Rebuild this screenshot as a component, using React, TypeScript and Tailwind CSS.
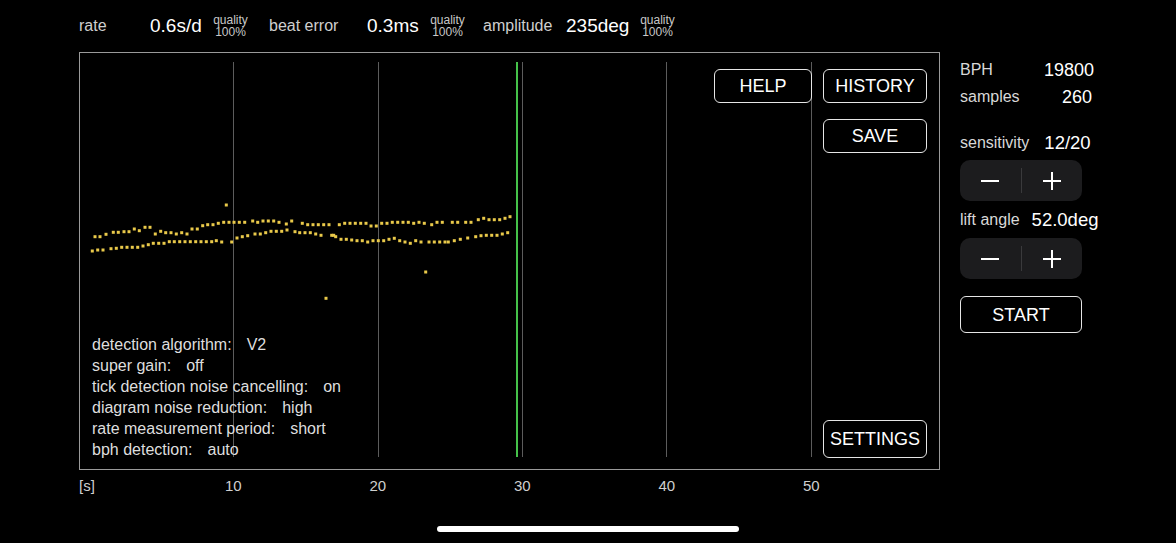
import { ReactNode } from 'react';

// upper and lower beat traces, chart-local coordinates (px)
const upper: [number, number][] = [
  [16, 184.7], [21, 184.7], [27, 182.3], [34.3, 180.3], [39.3, 180.3], [45, 179.7], [50, 179.7],
  [55.3, 177], [60.3, 178.7], [66, 175.3], [71, 175.3], [76.3, 182], [81.7, 179.3], [86.7, 180.7],
  [92, 180.7], [97.3, 182], [102.7, 180.7], [108, 182], [113, 177], [118.3, 177], [123.7, 173.7],
  [128.7, 172.7], [134, 172.7], [139.3, 171.3], [144.7, 170.3], [150, 170.3], [155, 170.3],
  [160.3, 170.3], [165.7, 170.3], [173.7, 169], [178.7, 170.3], [184, 169], [189.3, 169],
  [194.7, 169], [200, 170.3], [207.3, 172], [212.7, 169], [223.3, 171.3], [228.7, 172.7],
  [234, 172.7], [239.3, 172.7], [244.7, 172.7], [250, 172.7], [260.3, 172.7], [265.7, 171.3],
  [271, 171.3], [276.3, 171.3], [281.7, 171.3], [287, 171.3], [292, 174], [297.3, 174],
  [302.7, 171.3], [308, 171.3], [313.3, 170.3], [318.7, 170.3], [324, 170.3], [329.3, 170.3],
  [334.7, 171.3], [340, 170.3], [345.3, 171.3], [352.7, 172.7], [358, 170.3], [363.3, 170.3],
  [373.3, 170.3], [378.7, 170.3], [386.7, 170.3], [392, 170.3], [399.3, 167.7], [404.7, 166.3],
  [410, 167.7], [415.3, 167.7], [420.7, 167.7], [426, 166.3], [431, 164.7],
];

const lower: [number, number][] = [
  [13.3, 199], [18.7, 198], [24, 198], [32, 196.7], [37.3, 196.3], [42.7, 195.3], [48, 195.3],
  [53.3, 195.3], [58.7, 195.3], [64, 194], [69.3, 192.7], [74.3, 191.3], [79.7, 191.3], [85, 191.3],
  [90.3, 189.7], [95.3, 189.7], [100.7, 189.7], [106, 189.7], [111.3, 189.7], [116.7, 189.7],
  [122, 189.7], [127.3, 189.7], [132.7, 189.7], [137.3, 188.7], [142.7, 190], [152.7, 190],
  [158, 186], [163.3, 184.7], [168.7, 183.7], [176, 182], [181.3, 182], [186.7, 180.7],
  [192, 179.3], [197.3, 179.3], [202.7, 179.3], [208, 178], [216, 179.7], [220.7, 180.7],
  [226, 180.7], [231.3, 180.7], [236.7, 182], [242, 183.3], [252.7, 183.3], [254.7, 183.3],
  [256.7, 184.7], [262, 187.3], [267.3, 187.3], [272.7, 188], [278, 188.7], [283.3, 188.7],
  [288.7, 190], [294, 188.7], [299.3, 188.7], [304.7, 188.7], [310, 187.3], [315.3, 186.3],
  [320.7, 188.7], [326, 190], [331.3, 191.3], [336.7, 188.7], [342, 190], [350, 190], [355.3, 190],
  [360.7, 190], [366, 190], [369.3, 190], [375.3, 188.7], [381.3, 187.3], [388.7, 186],
  [396.7, 184.7], [402, 183.7], [407.3, 183.3], [412.7, 183.3], [418, 183.3], [423.3, 182],
  [428.7, 180.7],
];

const strays: [number, number][] = [
  [147.3, 153], [247, 246.3], [346.7, 220],
];

const gridX = [153, 298, 442, 586, 731];

function Quality() {
  return (
    <div className="flex w-[35px] flex-col items-center text-[12px] leading-[12px] text-[#c8c8c8]">
      <span>quality</span>
      <span>100%</span>
    </div>
  );
}

function Reading({ label, value, labelW, valueW }: { label: string; value: string; labelW: string; valueW: string }) {
  return (
    <>
      <span className={`${labelW} text-[16px] text-[#cfcfcf]`}>{label}</span>
      <span className={`${valueW} text-[19px] text-white`}>{value}</span>
      <Quality />
    </>
  );
}

function OutlineButton({ children, className }: { children: ReactNode; className: string }) {
  return (
    <button
      className={`flex items-center justify-center rounded-[6px] border-[1.5px] border-[#e6e6e6] pt-px text-[18px] text-white ${className}`}
    >
      {children}
    </button>
  );
}

function Stepper() {
  return (
    <div className="flex h-[41px] w-[122px] items-center rounded-[10px] bg-[#1c1c1e]">
      <button className="flex flex-1 items-center justify-center">
        <svg width="20" height="20" viewBox="0 0 20 20">
          <line x1="1" y1="10" x2="19" y2="10" stroke="white" strokeWidth="2" />
        </svg>
      </button>
      <div className="h-[25px] w-px bg-[#3a3a3c]" />
      <button className="flex flex-1 items-center justify-center">
        <svg width="20" height="20" viewBox="0 0 20 20">
          <line x1="1" y1="10" x2="19" y2="10" stroke="white" strokeWidth="2" />
          <line x1="10" y1="1" x2="10" y2="19" stroke="white" strokeWidth="2" />
        </svg>
      </button>
    </div>
  );
}

const settings = [
  ['detection algorithm:', 'V2'],
  ['super gain:', 'off'],
  ['tick detection noise cancelling:', 'on'],
  ['diagram noise reduction:', 'high'],
  ['rate measurement period:', 'short'],
  ['bph detection:', 'auto'],
];

function Dot({ x, y }: { x: number; y: number }) {
  return <rect x={x - 2.5} y={y - 2.5} width="3" height="3" fill="#e9c94a" />;
}

export default function App() {
  return (
    <div
      className="relative h-[543px] w-[1176px] overflow-hidden bg-black"
      style={{ fontFamily: '"Liberation Sans", Arial, sans-serif' }}
    >
      {/* live readings */}
      <div className="flex h-[52px] items-center pl-[79px]">
        <Reading label="rate" value="0.6s/d" labelW="w-[71px]" valueW="w-[63px]" />
        <span className="w-[21px]" />
        <Reading label="beat error" value="0.3ms" labelW="w-[98px]" valueW="w-[63px]" />
        <span className="w-[18px]" />
        <Reading label="amplitude" value="235deg" labelW="w-[83px]" valueW="w-[74px]" />
      </div>

      <div className="flex">
        {/* timegrapher diagram */}
        <div className="relative ml-[79px] h-[418px] w-[861px] border border-[#9a9a9a]">
          <svg className="absolute inset-0" width="859" height="416">
            {gridX.map((x) => (
              <line key={x} x1={x + 0.5} y1="9" x2={x + 0.5} y2="404" stroke="#5c5c5c" strokeWidth="1" />
            ))}
            <line x1="437" y1="9" x2="437" y2="404" stroke="#45c24a" strokeWidth="2" />
            {upper.map(([x, y], i) => (
              <Dot key={`u${i}`} x={x} y={y} />
            ))}
            {lower.map(([x, y], i) => (
              <Dot key={`l${i}`} x={x} y={y} />
            ))}
            {strays.map(([x, y], i) => (
              <Dot key={`s${i}`} x={x} y={y} />
            ))}
          </svg>

          <div className="absolute inset-0 flex gap-[11px] pt-[16px] pr-[12px] pb-[11px] pl-[12px]">
            <div className="flex flex-1 flex-col">
              <OutlineButton className="h-[34px] w-[98px] self-end">HELP</OutlineButton>
              <div className="mt-auto mb-[-2px] text-[16px] leading-[21px] text-[#dedede]">
                {settings.map(([k, v]) => (
                  <div key={k}>
                    {k}
                    <span className="ml-[15px]">{v}</span>
                  </div>
                ))}
              </div>
            </div>
            <div className="flex w-[104px] flex-col gap-[16px]">
              <OutlineButton className="h-[34px] w-full">HISTORY</OutlineButton>
              <OutlineButton className="h-[34px] w-full">SAVE</OutlineButton>
              <OutlineButton className="mt-auto h-[38px] w-full">SETTINGS</OutlineButton>
            </div>
          </div>
        </div>

        {/* controls */}
        <div className="ml-[20px] flex w-[140px] flex-col pt-[7px]">
          <div className="flex w-[134px] items-center justify-between leading-[22px]">
            <span className="text-[16px] text-[#d8d8d8]">BPH</span>
            <span className="text-[18px] text-white">19800</span>
          </div>
          <div className="mt-[5px] flex w-[132px] items-center justify-between leading-[22px]">
            <span className="text-[16px] text-[#d8d8d8]">samples</span>
            <span className="text-[18px] text-white">260</span>
          </div>
          <div className="mt-[24px] flex items-center leading-[22px]">
            <span className="text-[16px] text-[#d8d8d8]">sensitivity</span>
            <span className="ml-[15px] text-[18.5px] text-white">12/20</span>
          </div>
          <div className="mt-[6px]">
            <Stepper />
          </div>
          <div className="mt-[8px] flex items-center leading-[22px]">
            <span className="text-[16px] text-[#d8d8d8]">lift angle</span>
            <span className="ml-[12px] text-[18.5px] text-white">52.0deg</span>
          </div>
          <div className="mt-[7px]">
            <Stepper />
          </div>
          <OutlineButton className="mt-[17px] h-[37px] w-[122px]">START</OutlineButton>
        </div>
      </div>

      {/* seconds axis */}
      <div className="mt-[5px] flex pl-[79px] text-[15px] leading-[22px] text-[#cfcfcf]">
        <span className="w-[82px]">[s]</span>
        {[10, 20, 30, 40, 50].map((t) => (
          <span key={t} className="w-[144.5px] text-center">
            {t}
          </span>
        ))}
      </div>

      <div className="mx-auto mt-[29px] h-[6px] w-[302px] rounded-full bg-white" />
    </div>
  );
}
